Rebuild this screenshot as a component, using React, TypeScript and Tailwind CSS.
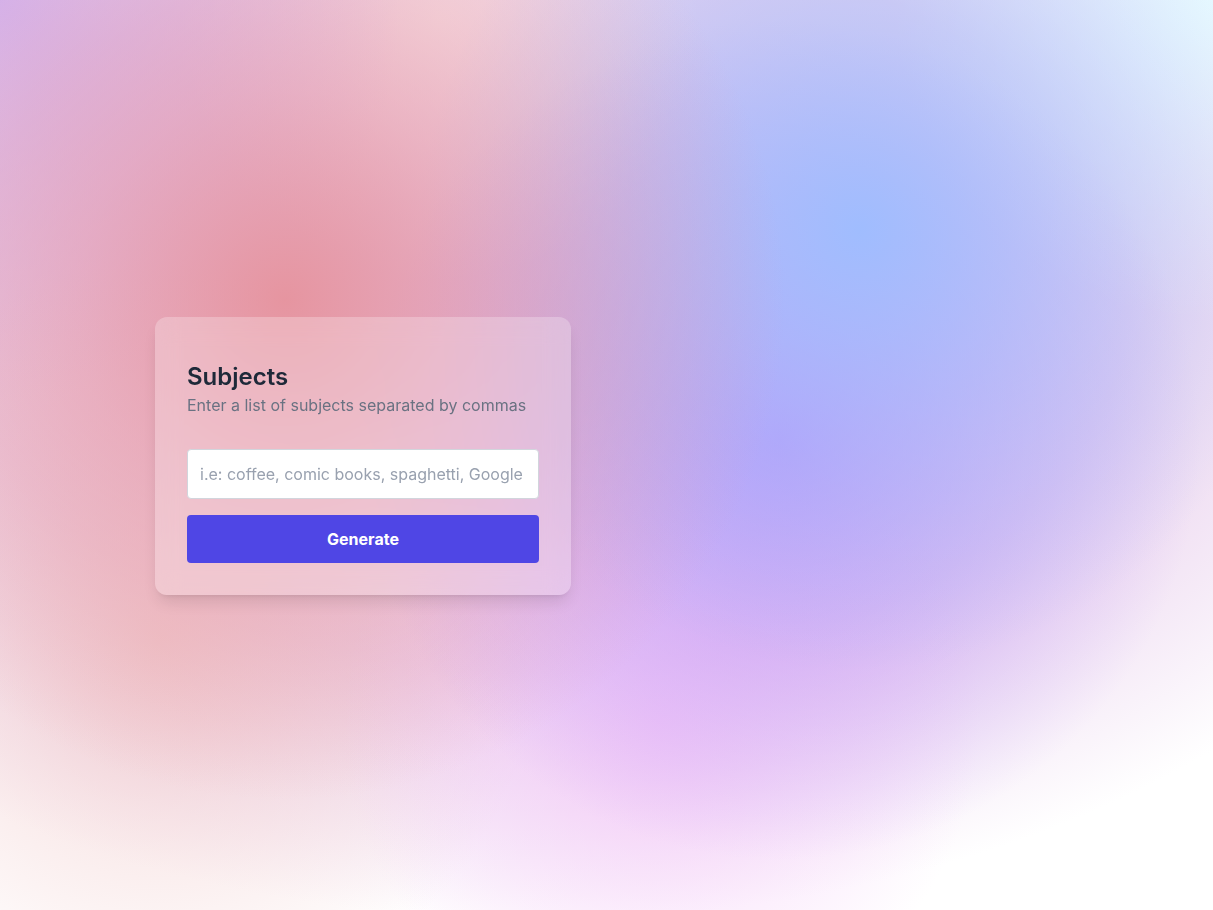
import React from "react";

export default function App() {
  return (
    <div
      className="min-h-screen w-full flex items-center pl-[155px] font-['Inter',sans-serif] bg-white bg-[radial-gradient(circle_500px_at_285px_300px,rgba(230,146,156,0.95)_0%,rgba(232,150,162,0.55)_42%,rgba(232,150,162,0)_100%),radial-gradient(circle_440px_at_860px_230px,rgba(157,189,255,0.95)_0%,rgba(157,189,255,0.5)_45%,rgba(157,189,255,0)_100%),radial-gradient(circle_420px_at_780px_440px,rgba(188,150,248,0.95)_0%,rgba(188,150,248,0.5)_45%,rgba(188,150,248,0)_100%),radial-gradient(circle_320px_at_660px_720px,rgba(244,200,248,0.9)_0%,rgba(244,200,248,0.45)_45%,rgba(244,200,248,0)_100%),radial-gradient(circle_380px_at_160px_640px,rgba(240,196,196,0.8)_0%,rgba(240,196,196,0.4)_45%,rgba(240,196,196,0)_100%),radial-gradient(circle_400px_at_0px_0px,rgba(208,180,246,0.95)_0%,rgba(208,180,246,0.5)_45%,rgba(208,180,246,0)_100%),radial-gradient(circle_320px_at_1213px_0px,rgba(232,250,255,1)_0%,rgba(232,250,255,0.5)_45%,rgba(232,250,255,0)_100%),radial-gradient(circle_260px_at_440px_20px,rgba(248,230,234,0.9)_0%,rgba(248,230,234,0)_100%),radial-gradient(ellipse_980px_620px_at_540px_300px,#dfc2ea_0%,#ead2ee_60%,rgba(255,255,255,0)_100%)]"
    >
      <div className="mt-[2px] w-[416px] rounded-xl bg-white/25 backdrop-blur-md shadow-lg shadow-black/10 px-8 pt-[44px] pb-8">
        <h2 className="text-2xl font-semibold text-gray-800">Subjects</h2>
        <p className="text-base text-gray-500">Enter a list of subjects separated by commas</p>
        <input
          type="text"
          placeholder="i.e: coffee, comic books, spaghetti, Google"
          className="mt-8 block w-full h-[50px] rounded border border-gray-300 bg-white px-3 text-base text-gray-800 placeholder:text-gray-400 outline-none"
        />
        <button className="mt-4 w-full h-12 rounded bg-[#4f46e5] text-base font-bold text-white">
          Generate
        </button>
      </div>
    </div>
  );
}
